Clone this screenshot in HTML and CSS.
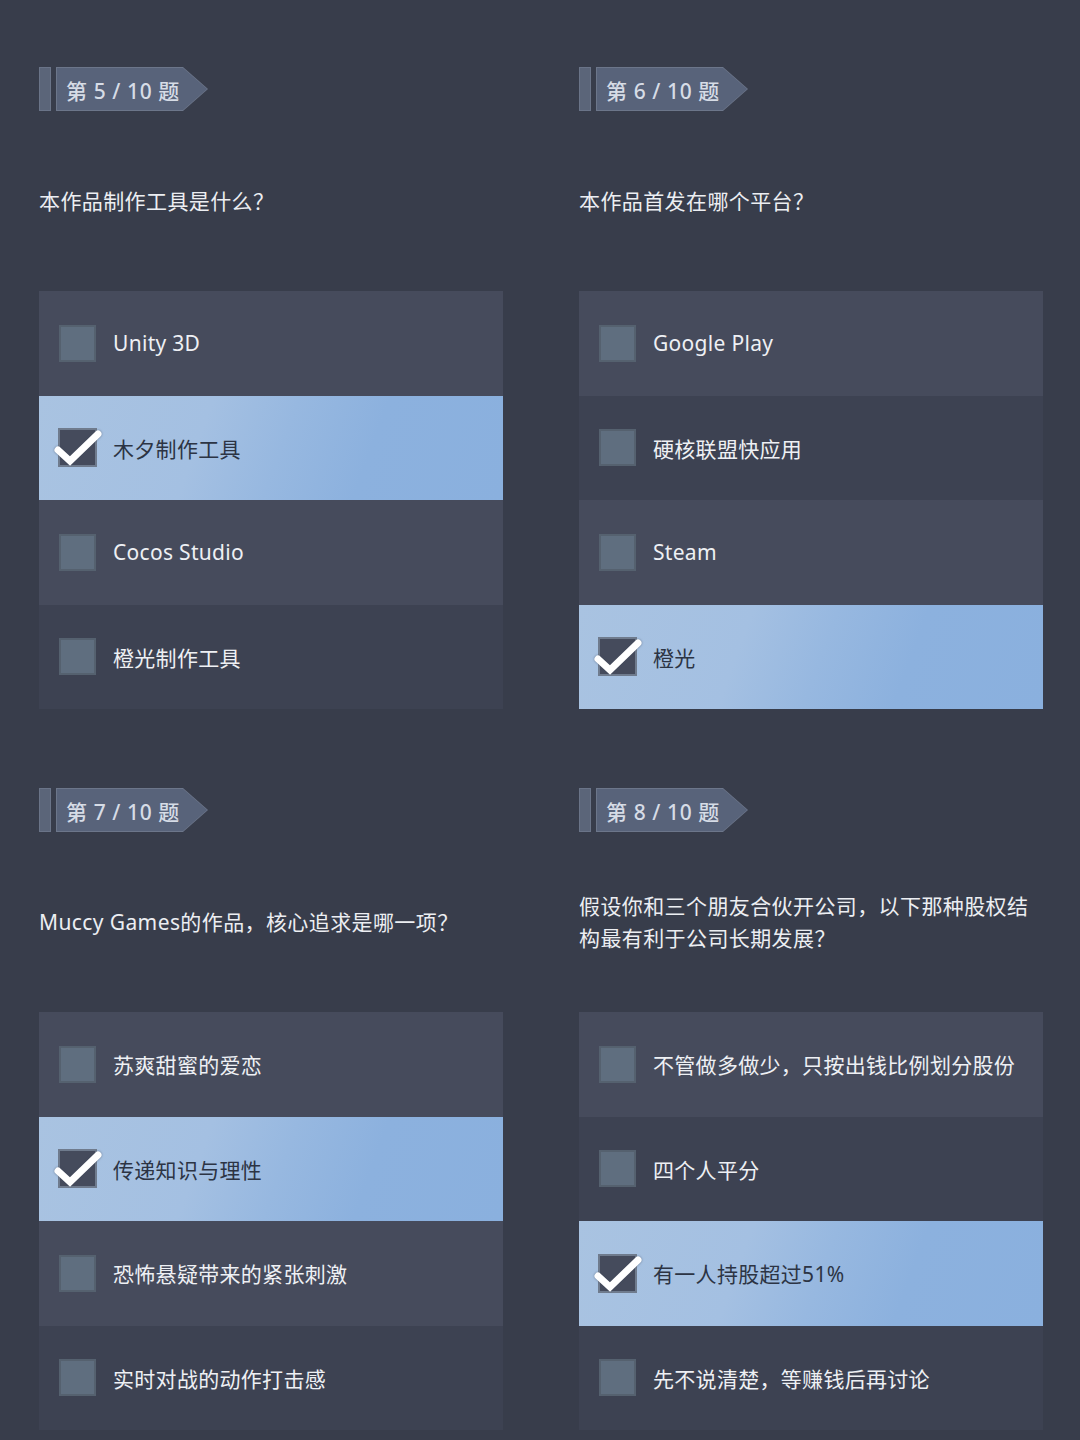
FILE: index.html
```html
<!DOCTYPE html>
<html lang="zh-CN">
<head>
<meta charset="utf-8">
<title>Quiz</title>
<link rel="stylesheet" href="styles.css">
</head>
<body>
<main class="page">
  <section class="quiz">
    <div class="tag"><span class="tag-bar"></span><span class="tag-main"><span class="tag-inner">第 5 / 10 题</span></span></div>
    <div class="question">本作品制作工具是什么？</div>
    <ul class="options">
      <li class="opt"><span class="box"></span><span class="label">Unity 3D</span></li>
      <li class="opt selected"><span class="box checked"><svg class="check" viewBox="0 0 48 36"><path d="M4 20 L16 31 L44 4" /></svg></span><span class="label">木夕制作工具</span></li>
      <li class="opt"><span class="box"></span><span class="label">Cocos Studio</span></li>
      <li class="opt"><span class="box"></span><span class="label">橙光制作工具</span></li>
    </ul>
  </section>
  <section class="quiz">
    <div class="tag"><span class="tag-bar"></span><span class="tag-main"><span class="tag-inner">第 6 / 10 题</span></span></div>
    <div class="question">本作品首发在哪个平台？</div>
    <ul class="options">
      <li class="opt"><span class="box"></span><span class="label">Google Play</span></li>
      <li class="opt"><span class="box"></span><span class="label">硬核联盟快应用</span></li>
      <li class="opt"><span class="box"></span><span class="label">Steam</span></li>
      <li class="opt selected"><span class="box checked"><svg class="check" viewBox="0 0 48 36"><path d="M4 20 L16 31 L44 4" /></svg></span><span class="label">橙光</span></li>
    </ul>
  </section>
  <section class="quiz">
    <div class="tag"><span class="tag-bar"></span><span class="tag-main"><span class="tag-inner">第 7 / 10 题</span></span></div>
    <div class="question">Muccy Games的作品，核心追求是哪一项？</div>
    <ul class="options">
      <li class="opt"><span class="box"></span><span class="label">苏爽甜蜜的爱恋</span></li>
      <li class="opt selected"><span class="box checked"><svg class="check" viewBox="0 0 48 36"><path d="M4 20 L16 31 L44 4" /></svg></span><span class="label">传递知识与理性</span></li>
      <li class="opt"><span class="box"></span><span class="label">恐怖悬疑带来的紧张刺激</span></li>
      <li class="opt"><span class="box"></span><span class="label">实时对战的动作打击感</span></li>
    </ul>
  </section>
  <section class="quiz">
    <div class="tag"><span class="tag-bar"></span><span class="tag-main"><span class="tag-inner">第 8 / 10 题</span></span></div>
    <div class="question">假设你和三个朋友合伙开公司，以下那种股权结构最有利于公司长期发展？</div>
    <ul class="options">
      <li class="opt"><span class="box"></span><span class="label">不管做多做少，只按出钱比例划分股份</span></li>
      <li class="opt"><span class="box"></span><span class="label">四个人平分</span></li>
      <li class="opt selected"><span class="box checked"><svg class="check" viewBox="0 0 48 36"><path d="M4 20 L16 31 L44 4" /></svg></span><span class="label">有一人持股超过51%</span></li>
      <li class="opt"><span class="box"></span><span class="label">先不说清楚，等赚钱后再讨论</span></li>
    </ul>
  </section>
</main>
</body>
</html>
```
FILE: styles.css
```css
* { box-sizing: border-box; }
html, body {
  margin: 0;
  padding: 0;
  background: #383d4b;
}
body {
  font-family: "Noto Sans", "Noto Sans CJK SC", sans-serif;
  color: #eceef2;
  width: 1080px;
  height: 1440px;
  overflow: hidden;
}
.page {
  display: grid;
  grid-template-columns: 464px 464px;
  column-gap: 76px;
  row-gap: 79px;
  padding: 67px 0 0 39px;
}
.quiz {
  display: flex;
  flex-direction: column;
}
.tag {
  display: flex;
  height: 44px;
  gap: 5px;
}
.tag-bar {
  width: 12px;
  height: 44px;
  background: #5b6579;
  border: 1px solid #6a7488;
}
.tag-main {
  width: 152px;
  height: 44px;
  background: #6c768a;
  clip-path: polygon(0 0, 127px 0, 152px 22px, 127px 44px, 0 44px);
  padding: 1px;
}
.tag-inner {
  display: flex;
  align-items: center;
  height: 42px;
  width: 150px;
  padding-left: 9px;
  padding-top: 2px;
  background: #58637a;
  clip-path: polygon(0 0, 126px 0, 150px 21px, 126px 42px, 0 42px);
  color: #d6dce6;
  font-size: 21px;
  font-weight: 500;
  letter-spacing: 0.6px;
  white-space: pre;
}
.question {
  height: 180px;
  display: flex;
  align-items: center;
  font-size: 21px;
  line-height: 32px;
  color: #eceef2;
  letter-spacing: 0.4px;
}
.options {
  list-style: none;
  margin: 0;
  padding: 0;
  display: flex;
  flex-direction: column;
}
.opt {
  height: 104.5px;
  display: flex;
  align-items: center;
  padding-left: 20px;
  gap: 17px;
  background: #464b5c;
}
.opt:nth-child(even) {
  background: #3d4252;
}
.opt.selected {
  background: linear-gradient(110deg, #a9c3e1 0%, #a4c0e2 35%, #97b8e0 52%, #8cb1de 70%, #8ab0de 100%);
}
.box {
  position: relative;
  width: 37px;
  height: 37px;
  flex: none;
  background: #5f6e7f;
  border: 2px solid #55616f;
}
.box.checked {
  width: 39px;
  height: 39px;
  margin-left: -1px;
  margin-right: -1px;
  background: #454b5c;
  border: 2px solid #6f7b8d;
}
.check {
  position: absolute;
  left: -6px;
  top: 0px;
  width: 48px;
  height: 36px;
  overflow: visible;
}
.check path {
  fill: none;
  stroke: #ffffff;
  stroke-width: 7;
  stroke-linecap: round;
  stroke-linejoin: miter;
  filter: drop-shadow(0 0 1px rgba(60,70,90,0.6));
}
.label {
  font-size: 21px;
  color: #eef0f4;
  letter-spacing: 0.3px;
}
.selected .label {
  color: #2c3444;
}
```
